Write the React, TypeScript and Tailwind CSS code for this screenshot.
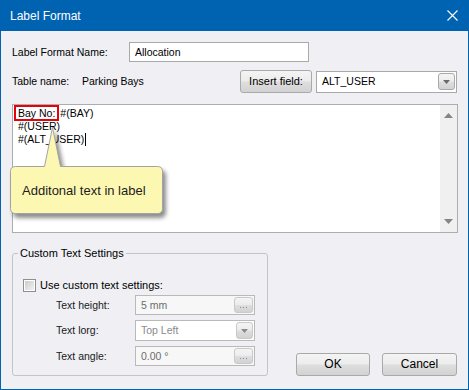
import React from "react";

const btnBg =
  "bg-[linear-gradient(#f4f4f4_0%,#ececec_48%,#dedede_52%,#d2d2d2_100%)]";

function SmallDots() {
  return (
    <div
      className={`w-[19px] h-[16px] rounded-[3px] border border-[#c9c9c9] ${btnBg} flex items-end justify-center pb-[4px] gap-[2px]`}
    >
      <span className="w-px h-px bg-[#8a8a8a]" />
      <span className="w-px h-px bg-[#8a8a8a]" />
      <span className="w-px h-px bg-[#8a8a8a]" />
    </div>
  );
}

function DropBtn({ dim }: { dim?: boolean }) {
  return (
    <div
      className={`w-[17px] h-[17px] rounded-[3px] border ${
        dim ? "border-[#c9c9c9]" : "border-[#a9a9a9]"
      } ${btnBg} flex items-center justify-center`}
    >
      <svg width="7" height="4" viewBox="0 0 7 4">
        <path d="M0 0 H7 L3.5 4 Z" fill={dim ? "#8a8a8a" : "#6a6a6a"} />
      </svg>
    </div>
  );
}

export default function App() {
  return (
    <div className="relative w-[469px] h-[390px] flex flex-col bg-[#0063b1] font-['Liberation_Sans',Arial,sans-serif] text-[10.5px] leading-[13px] text-black overflow-hidden">
      {/* Title bar */}
      <div className="h-[31px] shrink-0 flex items-center justify-between pl-[10px] pr-[11px] text-white text-[12px]">
        <span className="mt-[1px]">Label Format</span>
        <svg width="11" height="11" viewBox="0 0 11 11">
          <path d="M0.5 0.5 L10.5 10.5 M10.5 0.5 L0.5 10.5" stroke="#ffffff" strokeWidth="1.1" />
        </svg>
      </div>

      {/* Body */}
      <div className="flex-1 mx-px mb-px bg-[#efeff4] flex flex-col pl-[11px] pr-[10px] pt-[11px]">
        {/* Row 1 */}
        <div className="flex items-center h-[20px]">
          <span className="w-[117px]">Label Format Name:</span>
          <div className="w-[180px] h-[20px] border border-[#a9a9a9] bg-white flex items-center pl-[5px]">
            Allocation
          </div>
        </div>

        {/* Row 2 */}
        <div className="flex items-center h-[23px] mt-[8px]">
          <span className="w-[70px]">Table name:</span>
          <span className="w-[158px]">Parking Bays</span>
          <div
            className={`w-[72px] h-[23px] rounded-[3px] border border-[#a9a9a9] ${btnBg} flex items-center justify-center text-[11px]`}
          >
            Insert field:
          </div>
          <div className="ml-[4px] w-[141px] h-[22px] border border-[#a9a9a9] bg-white flex items-center justify-between pl-[5px] pr-[1px]">
            <span>ALT_USER</span>
            <DropBtn />
          </div>
        </div>

        {/* Text area */}
        <div className="mt-[11px] w-[446px] h-[129px] border border-[#abadb3] bg-white flex">
          <div className="flex-1 pl-[3px] pt-[2px]">
            <div className="h-[13px] whitespace-pre">
              <span className="outline-2 outline-solid outline-[#e8000b] outline-offset-[0px] px-[2px] mr-[3px]">
                Bay No:
              </span>
              <span>#(BAY)</span>
            </div>
            <div className="h-[13px] pl-[2px]">#(USER)</div>
            <div className="h-[13px] pl-[2px] flex items-center">
              <span>#(ALT_USER)</span>
              <span className="inline-block w-px h-[13px] bg-black ml-[1px]" />
            </div>
          </div>
          <div className="w-[17px] bg-[#f0f0f0] flex flex-col items-center justify-between pt-[8px] pb-[8px]">
            <svg width="9" height="5" viewBox="0 0 9 5">
              <path d="M0 5 L4.5 0 L9 5 Z" fill="#858585" />
            </svg>
            <svg width="9" height="5" viewBox="0 0 9 5">
              <path d="M0 0 H9 L4.5 5 Z" fill="#858585" />
            </svg>
          </div>
        </div>

        {/* Bottom */}
        <div className="flex mt-[14px]">
          <fieldset className="w-[256px] h-[129px] border border-[#c3c3c8] rounded-[3px]">
            <legend className="ml-[5px] px-[2px] text-[11px] leading-[13px]">
              Custom Text Settings
            </legend>
            <div className="pl-[10px] pt-[19px] flex flex-col">
              <div className="flex items-center h-[13px]">
                <div className="w-[13px] h-[13px] border border-[#8e8f8f] bg-white p-px">
                  <div className="w-full h-full bg-[linear-gradient(135deg,#cbcbcb,#f2f2f2)]" />
                </div>
                <span className="ml-[4px] text-[11px]">Use custom text settings:</span>
              </div>

              <div className="flex items-center h-[20px] mt-[3px] pl-[33px]">
                <span className="w-[79px] text-[#1a1a1a]">Text height:</span>
                <div className="w-[120px] h-[20px] border border-[#b9b9b9] bg-[#f7f7f7] flex items-center justify-between pl-[5px] pr-[1px] text-[#6d6d6d]">
                  <span>5 mm</span>
                  <SmallDots />
                </div>
              </div>

              <div className="flex items-center h-[21px] mt-[5px] pl-[33px]">
                <span className="w-[79px] text-[#1a1a1a]">Text lorg:</span>
                <div className="w-[120px] h-[21px] border border-[#b9b9b9] bg-white flex items-center justify-between pl-[5px] pr-[1px] text-[#8a8a8a]">
                  <span>Top Left</span>
                  <DropBtn dim />
                </div>
              </div>

              <div className="flex items-center h-[20px] mt-[5px] pl-[33px]">
                <span className="w-[79px] text-[#1a1a1a]">Text angle:</span>
                <div className="w-[120px] h-[20px] border border-[#b9b9b9] bg-[#f7f7f7] flex items-center justify-between pl-[5px] pr-[1px] text-[#6d6d6d]">
                  <span>0.00 °</span>
                  <SmallDots />
                </div>
              </div>
            </div>
          </fieldset>

          <div className="flex-1 flex items-end justify-end gap-[12px] pr-[1px] pb-[0px]">
            <div
              className={`w-[74px] h-[23px] rounded-[3px] border border-[#a9a9a9] ${btnBg} flex items-center justify-center text-[12px]`}
            >
              OK
            </div>
            <div
              className={`w-[75px] h-[23px] rounded-[3px] border border-[#a9a9a9] ${btnBg} flex items-center justify-center text-[12px]`}
            >
              Cancel
            </div>
          </div>
        </div>
      </div>

      {/* Tooltip callout */}
      <svg
        className="absolute left-[6px] top-[122px] drop-shadow-[3px_4px_2px_rgba(0,0,0,0.45)]"
        width="166"
        height="100"
        viewBox="6 122 166 100"
      >
        <path
          d="M15.5 166.5 L44.5 166.5 L52.5 127.5 L60.5 166.5 L157.5 166.5 Q162.5 166.5 162.5 171.5 L162.5 208.5 Q162.5 213.5 157.5 213.5 L15.5 213.5 Q10.5 213.5 10.5 208.5 L10.5 171.5 Q10.5 166.5 15.5 166.5 Z"
          fill="#fcf8b2"
          stroke="#a3a3a3"
          strokeWidth="1"
        />
      </svg>
      <div className="absolute left-[22px] top-[183px] text-[13px] leading-[16px] text-[#1c1c1c]">
        Additonal text in label
      </div>
    </div>
  );
}
